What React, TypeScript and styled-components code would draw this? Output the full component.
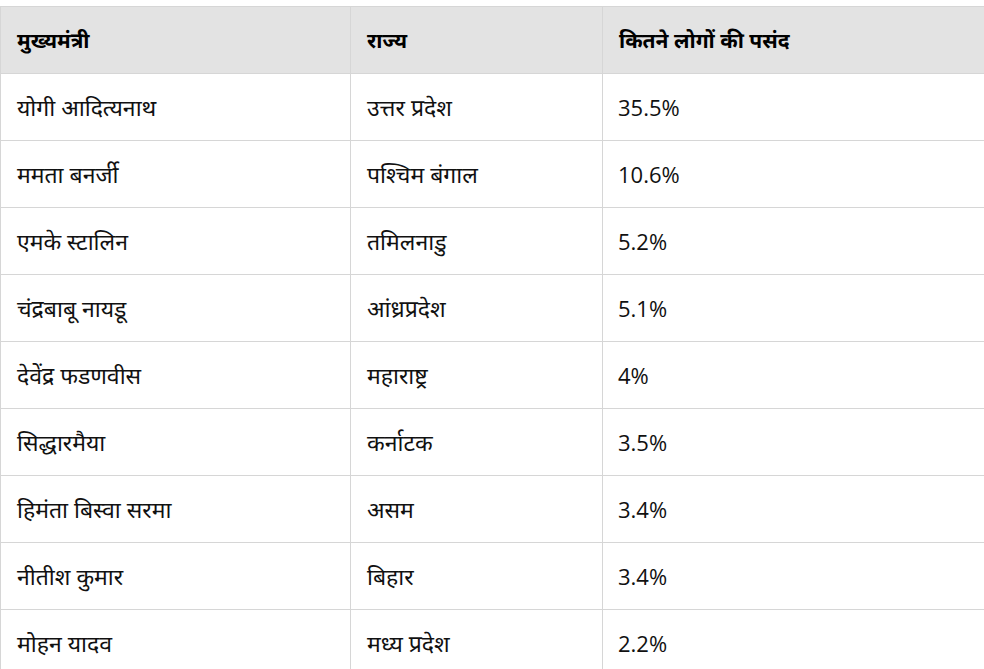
import React from 'react';
import styled, { createGlobalStyle } from 'styled-components';

const GlobalStyle = createGlobalStyle`
  html, body {
    margin: 0;
    padding: 0;
    background: #fff;
    overflow: hidden;
  }
  body {
    font-family: "Open Sans", "Noto Sans", "Noto Sans Devanagari", sans-serif;
    color: #111;
  }
`;

const Wrap = styled.div`
  padding-top: 6px;
  width: 990px;
`;

const Table = styled.table`
  width: 990px;
  border-collapse: collapse;
  table-layout: fixed;
  font-size: 21px;
`;

const Head = styled.th`
  background: #e3e3e3;
  font-weight: 700;
  text-align: left;
  height: 67px;
  padding: 0 16px;
  border: 1px solid #d6d6d6;
  box-sizing: border-box;
  color: #000;
`;

const Cell = styled.td<{ $num?: boolean }>`
  height: 67px;
  padding: ${(p) => (p.$num ? '0 15px' : '0 16px')};
  border: 1px solid #d6d6d6;
  box-sizing: border-box;
  color: #111;
  font-size: ${(p) => (p.$num ? '22px' : '23px')};
`;

const rows: [string, string, string][] = [
  ['योगी आदित्यनाथ', 'उत्तर प्रदेश', '35.5%'],
  ['ममता बनर्जी', 'पश्चिम बंगाल', '10.6%'],
  ['एमके स्टालिन', 'तमिलनाडु', '5.2%'],
  ['चंद्रबाबू नायडू', 'आंध्रप्रदेश', '5.1%'],
  ['देवेंद्र फडणवीस', 'महाराष्ट्र', '4%'],
  ['सिद्धारमैया', 'कर्नाटक', '3.5%'],
  ['हिमंता बिस्वा सरमा', 'असम', '3.4%'],
  ['नीतीश कुमार', 'बिहार', '3.4%'],
  ['मोहन यादव', 'मध्य प्रदेश', '2.2%'],
];

export default function App() {
  return (
    <>
      <GlobalStyle />
      <Wrap>
        <Table>
          <colgroup>
            <col style={{ width: 350 }} />
            <col style={{ width: 252 }} />
            <col />
          </colgroup>
          <thead>
            <tr>
              <Head>मुख्यमंत्री</Head>
              <Head>राज्य</Head>
              <Head>कितने लोगों की पसंद</Head>
            </tr>
          </thead>
          <tbody>
            {rows.map((r) => (
              <tr key={r[0]}>
                <Cell>{r[0]}</Cell>
                <Cell>{r[1]}</Cell>
                <Cell $num>{r[2]}</Cell>
              </tr>
            ))}
          </tbody>
        </Table>
      </Wrap>
    </>
  );
}
